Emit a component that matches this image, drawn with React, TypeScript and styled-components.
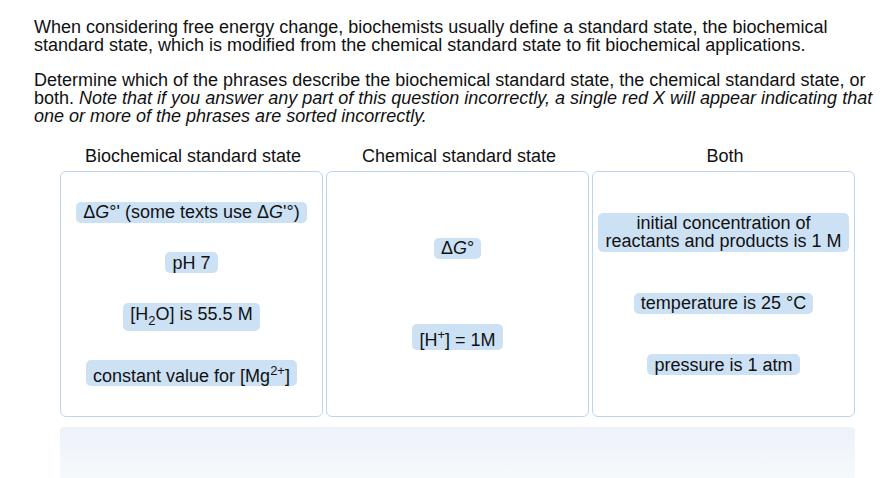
import React from "react";
import styled, { createGlobalStyle } from "styled-components";

type Chip = { key: string; content: React.ReactNode };

const biochemical: Chip[] = [
  {
    key: "dg1",
    content: (
      <>
        Δ<i>G</i>°' (some texts use Δ<i>G</i>'°)
      </>
    ),
  },
  { key: "ph", content: "pH 7" },
  {
    key: "h2o",
    content: (
      <>
        [H<sub>2</sub>O] is 55.5 M
      </>
    ),
  },
  {
    key: "mg",
    content: (
      <>
        constant value for [Mg<sup>2+</sup>]
      </>
    ),
  },
];

const chemical: Chip[] = [
  {
    key: "dg",
    content: (
      <>
        Δ<i>G</i>°
      </>
    ),
  },
  {
    key: "h",
    content: (
      <>
        [H<sup>+</sup>] = 1M
      </>
    ),
  },
];

const both: Chip[] = [
  {
    key: "conc",
    content: (
      <>
        initial concentration of
        <br />
        reactants and products is 1 M
      </>
    ),
  },
  { key: "temp", content: "temperature is 25 °C" },
  { key: "pres", content: "pressure is 1 atm" },
];

const columns = [
  { title: "Biochemical standard state", chips: biochemical },
  { title: "Chemical standard state", chips: chemical },
  { title: "Both", chips: both },
];

const App: React.FC = () => {
  return (
    <Page>
      <GlobalStyle />
      <Paragraph>
        When considering free energy change, biochemists usually define a standard state, the
        biochemical standard state, which is modified from the chemical standard state to fit
        biochemical applications.
      </Paragraph>
      <Paragraph>
        Determine which of the phrases describe the biochemical standard state, the chemical
        standard state, or both.{" "}
        <em>
          Note that if you answer any part of this question incorrectly, a single red X will
          appear indicating that one or more of the phrases are sorted incorrectly.
        </em>
      </Paragraph>
      <Sorter>
        <Columns>
          {columns.map((col) => (
            <Header key={col.title}>{col.title}</Header>
          ))}
          {columns.map((col) => (
            <Bin key={col.title + "-bin"}>
              {col.chips.map((chip) => (
                <Tag key={chip.key}>{chip.content}</Tag>
              ))}
            </Bin>
          ))}
        </Columns>
        <Tray />
      </Sorter>
    </Page>
  );
};

const GlobalStyle = createGlobalStyle`
  html, body {
    margin: 0;
    padding: 0;
    background: #ffffff;
  }
  body {
    font-family: "Liberation Sans", Arial, sans-serif;
    color: #111;
  }
`;

const Page = styled.div`
  width: 895px;
  height: 478px;
  overflow: hidden;
  box-sizing: border-box;
  padding: 18px 0 0 34px;
`;

const Paragraph = styled.p`
  width: 845px;
  margin: 0 0 17px;
  font-size: 18px;
  line-height: 18px;

  em {
    font-style: italic;
  }
`;

const Sorter = styled.div`
  margin: 22px 0 0 26px;
  width: 795px;
`;

const Columns = styled.div`
  display: grid;
  grid-template-columns: repeat(3, 263px);
  column-gap: 3px;
  row-gap: 6px;
`;

const Header = styled.div`
  text-align: center;
  font-size: 18px;
  line-height: 18px;
  padding-left: 3px;
`;

const Bin = styled.div`
  height: 246px;
  box-sizing: border-box;
  border: 1px solid #bad6f2;
  border-radius: 6px;
  display: flex;
  flex-direction: column;
  align-items: center;
  justify-content: space-evenly;
`;

const Tag = styled.div`
  background: #cde1f5;
  border-radius: 5px;
  padding: 1.5px 7px;
  font-size: 18px;
  line-height: 18px;
  text-align: center;
  white-space: nowrap;
  color: #111;

  i {
    font-style: italic;
  }

  sup,
  sub {
    font-size: 13px;
  }
`;

const Tray = styled.div`
  margin-top: 10px;
  height: 60px;
  border-radius: 4px 4px 0 0;
  background: linear-gradient(#edf2f9, #f8fafd);
`;

export default App;
